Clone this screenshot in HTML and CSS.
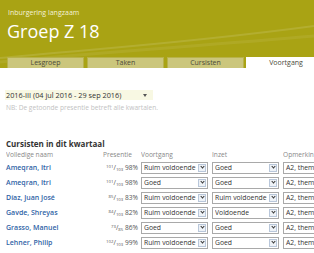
FILE: index.html
```html
<!DOCTYPE html>
<html lang="nl">
<head>
<meta charset="utf-8">
<title>Groep Z 18</title>
<link rel="stylesheet" href="styles.css">
</head>
<body>
<header class="top">
  <svg class="swoosh" width="314" height="68" viewBox="0 0 314 68" aria-hidden="true">
    <path d="M0 58 C 80 50, 180 44, 314 26" fill="none" stroke="rgba(255,255,255,0.12)" stroke-width="2"/>
    <path d="M0 62 C 100 52, 200 46, 314 36" fill="none" stroke="rgba(255,255,255,0.07)" stroke-width="3"/>
  </svg>
  <div class="sub">Inburgering langzaam</div>
  <h1 class="title">Groep Z 18</h1>
  <nav class="tabs">
    <span class="tab">Lesgroep</span>
    <span class="tab">Taken</span>
    <span class="tab">Cursisten</span>
    <span class="tab active">Voortgang</span>
  </nav>
</header>
<main class="content">
  <div class="period">
    <span>2016-III (04 jul 2016 - 29 sep 2016)</span>
    <span class="caret"></span>
  </div>
  <p class="nb">NB: De getoonde presentie betreft alle kwartalen.</p>
  <h2 class="section">Cursisten in dit kwartaal</h2>
  <div class="grid">
    <div class="th">Volledige naam</div>
    <div class="th">Presentie</div>
    <div class="th">Voortgang</div>
    <div class="th">Inzet</div>
    <div class="th">Opmerkin</div>

    <a class="name">Ameqran, Itri</a>
    <div class="pres"><sup>101</sup>/<sub>103</sub> 98%</div>
    <div class="sel"><span>Ruim voldoende</span><i></i></div>
    <div class="sel"><span>Goed</span><i></i></div>
    <div class="inp">A2, them</div>

    <a class="name">Ameqran, Itri</a>
    <div class="pres"><sup>101</sup>/<sub>103</sub> 98%</div>
    <div class="sel"><span>Goed</span><i></i></div>
    <div class="sel"><span>Goed</span><i></i></div>
    <div class="inp">A2, them</div>

    <a class="name">Díaz, Juan José</a>
    <div class="pres"><sup>85</sup>/<sub>103</sub> 83%</div>
    <div class="sel"><span>Ruim voldoende</span><i></i></div>
    <div class="sel"><span>Ruim voldoende</span><i></i></div>
    <div class="inp">A2, them</div>

    <a class="name">Gavde, Shreyas</a>
    <div class="pres"><sup>84</sup>/<sub>103</sub> 82%</div>
    <div class="sel"><span>Ruim voldoende</span><i></i></div>
    <div class="sel"><span>Voldoende</span><i></i></div>
    <div class="inp">A2, them</div>

    <a class="name">Grasso, Manuel</a>
    <div class="pres"><sup>73</sup>/<sub>85</sub> 86%</div>
    <div class="sel"><span>Goed</span><i></i></div>
    <div class="sel"><span>Goed</span><i></i></div>
    <div class="inp">A2, them</div>

    <a class="name">Lehner, Philip</a>
    <div class="pres"><sup>102</sup>/<sub>103</sub> 99%</div>
    <div class="sel"><span>Ruim voldoende</span><i></i></div>
    <div class="sel"><span>Goed</span><i></i></div>
    <div class="inp">A2, them</div>
  </div>
</main>
</body>
</html>
```
FILE: styles.css
```css
html, body {
  margin: 0;
  padding: 0;
  background: #fff;
  overflow: hidden;
}
body {
  width: 314px;
  height: 253px;
  font-family: "Open Sans", "DejaVu Sans", sans-serif;
  color: #333;
}
.top {
  position: relative;
  height: 68px;
  background: #a9a314;
  padding-left: 8px;
  box-sizing: border-box;
  display: flex;
  flex-direction: column;
  overflow: hidden;
}
.swoosh {
  position: absolute;
  left: 0;
  top: 0;
}
.sub {
  position: relative;
  margin-top: 8px;
  font-size: 7px;
  line-height: 9px;
  color: #f4f2d8;
}
.title {
  position: relative;
  margin: 4px 0 0 -1px;
  font-size: 18px;
  line-height: 20px;
  font-weight: 400;
  color: #fff;
}
.tabs {
  position: relative;
  margin-top: auto;
  margin-left: -1px;
  display: flex;
  gap: 3px;
  height: 11px;
}
.tab {
  width: 77px;
  height: 11px;
  box-sizing: border-box;
  background: #cbc67c;
  border: 1px solid #b8b24a;
  border-bottom: none;
  font-size: 7px;
  line-height: 10px;
  text-align: center;
  color: #4a4a3a;
  flex: none;
}
.tab.active {
  background: #fff;
  border-color: #fff;
  width: 80px;
  margin-left: -1px;
}
.content {
  padding: 22px 0 0 5px;
}
.period {
  width: 148px;
  height: 10px;
  background: #f8f8e3;
  display: flex;
  align-items: center;
  justify-content: space-between;
  padding: 0 6px 0 1px;
  box-sizing: border-box;
  font-size: 7.3px;
  color: #333;
  white-space: nowrap;
}
.caret {
  width: 0;
  height: 0;
  border-left: 2.5px solid transparent;
  border-right: 2.5px solid transparent;
  border-top: 3px solid #555;
}
.nb {
  margin: 4px 0 0 1px;
  font-size: 6.6px;
  line-height: 8px;
  color: #c2c2c2;
  white-space: nowrap;
}
.section {
  margin: 26px 0 0 1px;
  font-size: 8px;
  line-height: 11px;
  font-weight: 700;
  color: #333;
}
.grid {
  margin: -1px 0 0 1px;
  display: grid;
  grid-template-columns: 97px 38px 71px 71px 31px;
  grid-auto-rows: 15px;
  grid-template-rows: 12px;
  align-items: center;
}
.th {
  font-size: 6.6px;
  color: #888;
  white-space: nowrap;
  overflow: hidden;
}
.name {
  font-size: 7px;
  font-weight: 600;
  color: #2f63a6;
  white-space: nowrap;
}
.pres {
  font-size: 6.6px;
  color: #555;
  text-align: right;
  padding-right: 3px;
  white-space: nowrap;
}
.pres sup, .pres sub {
  font-size: 4.3px;
  line-height: 0;
}
.pres sup { vertical-align: 2px; }
.pres sub { vertical-align: -1px; }
.sel {
  width: 67px;
  height: 12px;
  box-sizing: border-box;
  border: 1px solid #a9a9a9;
  background: #fff;
  display: flex;
  align-items: center;
  justify-content: space-between;
  font-size: 6.8px;
  color: #333;
  padding-left: 2px;
}
.sel span { white-space: nowrap; overflow: hidden; }
.sel i {
  width: 8px;
  height: 8px;
  margin-right: 1px;
  box-sizing: border-box;
  border: 1px solid #b9c7da;
  background: #eef2f7;
  position: relative;
  flex: none;
}
.sel i::after {
  content: "";
  position: absolute;
  left: 1.5px;
  top: 0.5px;
  width: 2px;
  height: 2px;
  border-right: 1.2px solid #333;
  border-bottom: 1.2px solid #333;
  transform: rotate(45deg);
}
.inp {
  height: 12px;
  box-sizing: border-box;
  border: 1px solid #a9a9a9;
  border-right: none;
  font-size: 6.8px;
  line-height: 10px;
  padding-left: 2px;
  white-space: nowrap;
  overflow: hidden;
  color: #333;
}
```
